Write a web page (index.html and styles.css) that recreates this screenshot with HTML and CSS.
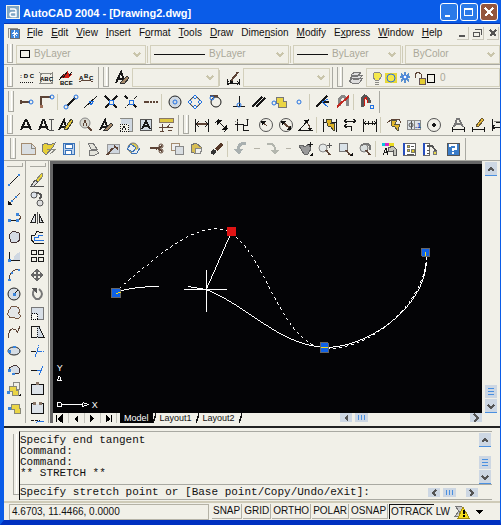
FILE: index.html
```html
<!DOCTYPE html>
<html lang="en">
<head>
<meta charset="utf-8">
<title>AutoCAD 2004 - [Drawing2.dwg]</title>
<link rel="stylesheet" href="styles.css">
</head>
<body>
<div class="window">
  <header class="title">
    <svg class="logo" viewBox="0 0 14 14"><rect x=".5" y=".5" width="13" height="13" fill="#7fa6c4" stroke="#f4f4ec"/><path d="M4 4h4q2 0 2 2v6M10 7.500H6q-2 0-2 2t2 2h4" fill="none" stroke="#fff" stroke-width="1.500" shape-rendering="auto"/></svg>
    <h1>AutoCAD 2004 - [Drawing2.dwg]</h1>
    <button class="cap" aria-label="Minimize"><svg viewBox="0 0 16 16"><path d="M4 12h5" stroke="#fff" stroke-width="2"/></svg></button>
    <button class="cap" aria-label="Maximize"><svg viewBox="0 0 16 16"><path d="M3 5h9" stroke="#fff" stroke-width="2"/><path d="M3.500 4v7.500h8V4" fill="none" stroke="#fff"/></svg></button>
    <button class="cap close" aria-label="Close"><svg viewBox="0 0 16 16"><path d="M4 4l8 8M12 4l-8 8" stroke="#fff" stroke-width="2"/></svg></button>
  </header>

  <nav class="menu">
    <svg class="doc" viewBox="0 0 14 13"><path d="M1 11V1h10" class="g"/><rect x="2.500" y="2.500" width="10" height="9" fill="#3c86dc" stroke="#666"/><path d="M7.500 3v8M4 7h7M5 4.500l5 5M10 4.500l-5 5" stroke="#fff"/></svg>
    <button><u>F</u>ile</button><button><u>E</u>dit</button><button><u>V</u>iew</button><button><u>I</u>nsert</button><button>F<u>o</u>rmat</button><button><u>T</u>ools</button><button><u>D</u>raw</button><button>Dime<u>n</u>sion</button><button><u>M</u>odify</button><button>E<u>x</u>press</button><button><u>W</u>indow</button><button><u>H</u>elp</button>
    <span class="mdi">
      <button aria-label="Minimize drawing"><svg viewBox="0 0 12 12"><path d="M2 9h6" class="d2"/></svg></button>
      <button aria-label="Restore drawing"><svg viewBox="0 0 12 12"><path d="M3 2.500h6.500v5M1.500 5.500h6v4h-6z" class="d"/><path d="M3 2h7" class="d"/></svg></button>
      <button aria-label="Close drawing"><svg viewBox="0 0 12 12"><path d="M3 3l6 6M9 3l-6 6" class="d2"/></svg></button>
    </span>
  </nav>

  <div class="bar props">
    <i class="grip"></i>
    <label class="combo c1"><svg class="sw" viewBox="0 0 10 8"><rect x=".5" y=".5" width="9" height="7" fill="none" stroke="#000"/></svg><select aria-label="Color"><option>ByLayer</option></select><svg class="chev" viewBox="0 0 8 5"><path d="M1 1l3 3 3-3"/></svg></label>
    <i class="sep"></i>
    <label class="combo c2"><i class="ln long"></i><select aria-label="Linetype"><option>ByLayer</option></select><svg class="chev" viewBox="0 0 8 5"><path d="M1 1l3 3 3-3"/></svg></label>
    <i class="sep"></i>
    <label class="combo c3"><i class="ln"></i><select aria-label="Lineweight"><option>ByLayer</option></select><svg class="chev" viewBox="0 0 8 5"><path d="M1 1l3 3 3-3"/></svg></label>
    <i class="sep"></i>
    <label class="combo c4"><select aria-label="Plot style"><option>ByColor</option></select><svg class="chev" viewBox="0 0 8 5"><path d="M1 1l3 3 3-3"/></svg></label>
  </div>

  <div class="bar layers">
    <i class="grip"></i>
    <button aria-label="Text fit"><svg viewBox="0 0 20 20"><text x="4" y="10" class="t6">: D C</text><path d="M4 14.500h13" class="k" stroke-dasharray="1 1"/></svg></button>
    <button aria-label="Text mask"><svg viewBox="0 0 20 20"><path d="M4 5h12v10H4zM3 4l3 3M17 4l-3 3M3 16l3-3M17 16l-3-3" class="g"/><text x="4" y="13" class="t6">ABC</text></svg></button>
    <button aria-label="Explode text"><svg viewBox="0 0 20 20"><path d="M5 10l4-5 3-2 1 3 3 0-3 4z" fill="#d02018"/><path d="M3 12l5-6M7 10l4-6M13 8l3-4" class="k"/><text x="4" y="17" class="t6">BCE</text></svg></button>
    <button aria-label="Arc text"><svg viewBox="0 0 20 20"><text x="3" y="12" class="t6">A</text><text x="8" y="10" class="t6">B</text><text x="13" y="12" class="t6">C</text><path d="M3 14q7-4 14 0" class="n"/></svg></button>
    <i class="edge"></i><i class="grip"></i>
    <button aria-label="Text style"><svg viewBox="0 0 20 20"><path d="M4 15L9 4l4 11M6 11h6" class="k2"/><path d="M8 15l7-7 2 2-5 6z" fill="#a58a6b" stroke="#333"/></svg></button>
    <label class="combo c5"><select aria-label="Text style name"></select><svg class="chev" viewBox="0 0 8 5"><path d="M1 1l3 3 3-3"/></svg></label>
    <i class="sep"></i>
    <button aria-label="Dimension style"><svg viewBox="0 0 20 20"><path d="M4 11v6M16 11v6M4 15h12M6 13l-2 2 2 2M14 13l2 2-2 2" class="k"/><path d="M8 13l7-9" class="n2"/><path d="M7 12l4 2-4 2z" fill="#111"/></svg></button>
    <label class="combo c5"><select aria-label="Dimension style name"></select><svg class="chev" viewBox="0 0 8 5"><path d="M1 1l3 3 3-3"/></svg></label>
    <i class="edge"></i><i class="grip"></i>
    <button aria-label="Layer manager"><svg viewBox="0 0 20 20"><path d="M3 13l5-3h9l-4 5H6zM4 10l5-3h8l-4 4H7zM5 7l4-3h6l-3 4H7z" fill="#ddd" stroke="#777"/></svg></button>
    <label class="combo c6">
      <svg class="state" viewBox="0 0 66 14"><path d="M5 1h4l2 2v3l-2 3H5L3 6V3z" fill="#f5e94c" stroke="#888"/><path d="M5 11h4M5 13h4" class="g"/><rect x="15" y="2" width="12" height="10" fill="#e8d838"/><circle cx="21" cy="7" r="4" fill="#f4e84a" stroke="#2a6fe0"/><path d="M35 1v11M30 6h10M31 3l8 7M39 3l-8 7" stroke="#5b91cf" stroke-width="2"/><circle cx="35" cy="6" r="2" fill="#fff" stroke="#2a6fe0"/><path d="M45 7V3l3-2 3 2v4" class="n"/><rect x="49" y="7" width="6" height="6" fill="#e3cc32" stroke="#655"/><rect x="57.500" y="3.500" width="7" height="8" fill="#f1f0e8" stroke="#000"/></svg>
      <select aria-label="Layer"><option>0</option></select></label>
  </div>

  <div class="bar snaps">
    <i class="grip"></i>
    <button aria-label="Tracking point"><svg viewBox="0 0 20 20"><path d="M3 10h10M4 8v4" class="n2"/><circle cx="14" cy="10" r="2" class="b"/></svg></button>
    <button aria-label="Snap from"><svg viewBox="0 0 20 20"><path d="M4 14V5h10" class="n2"/><circle cx="15" cy="5" r="2" class="b"/><rect x="3" y="13" width="3" height="3" fill="#a0715a"/></svg></button>
    <i class="sep"></i>
    <button aria-label="Endpoint"><svg viewBox="0 0 20 20"><path d="M6 14l8-8" class="k2"/><circle cx="15" cy="5" r="2" class="b"/><circle cx="5" cy="15" r="2" class="b"/></svg></button>
    <button aria-label="Midpoint"><svg viewBox="0 0 20 20"><path d="M3 16L16 4" class="k"/><path d="M8 9l2 4 3-4z" class="b"/></svg></button>
    <button aria-label="Intersection"><svg viewBox="0 0 20 20"><path d="M4 4l12 12M16 4L4 16" class="k2"/><path d="M8 8h4v4H8z" fill="#f1f0e8" stroke="#2272e2"/></svg></button>
    <button aria-label="Apparent intersection"><svg viewBox="0 0 20 20"><path d="M4 4l12 12" class="k2" stroke-dasharray="4 2"/><path d="M16 4L4 16" class="k" stroke-dasharray="4 1"/><path d="M8 8h4v4H8z" fill="#f1f0e8" stroke="#2272e2"/></svg></button>
    <button aria-label="Extension"><svg viewBox="0 0 20 20"><path d="M3 10h5" class="n2"/><path d="M9 10h9" class="n2" stroke-dasharray="2 1"/></svg></button>
    <i class="sep"></i>
    <button aria-label="Center"><svg viewBox="0 0 20 20"><circle cx="10" cy="10" r="6" fill="#cfd8e2" stroke="#222"/><circle cx="10" cy="10" r="2" class="b"/></svg></button>
    <button aria-label="Quadrant"><svg viewBox="0 0 20 20"><circle cx="10" cy="10" r="5" class="k"/><path d="M10 3l2 2-2 2-2-2zM10 13l2 2-2 2-2-2zM5 8l2 2-2 2-2-2zM15 8l2 2-2 2-2-2z" fill="#f1f0e8" stroke="#2272e2"/></svg></button>
    <button aria-label="Tangent"><svg viewBox="0 0 20 20"><circle cx="11" cy="10" r="5" class="k"/><path d="M5 4h8" class="n2"/><circle cx="7" cy="6" r="2" class="b"/></svg></button>
    <i class="sp"></i>
    <button aria-label="Perpendicular"><svg viewBox="0 0 20 20"><path d="M4 14.500h12M10 4v10" class="k"/><circle cx="10" cy="13" r="2" class="b"/></svg></button>
    <button aria-label="Parallel"><svg viewBox="0 0 20 20"><path d="M3 15L13 5M7 15L16 6" class="k2"/></svg></button>
    <button aria-label="Insertion"><svg viewBox="0 0 20 20"><path d="M7 5h7v4h3v6h-8v-4H7z" fill="#ead545" stroke="#777"/><circle cx="5" cy="11" r="2" class="b"/></svg></button>
    <button aria-label="Node"><svg viewBox="0 0 20 20"><circle cx="10" cy="10" r="2" class="b"/></svg></button>
    <i class="sep"></i>
    <button aria-label="Nearest"><svg viewBox="0 0 20 20"><path d="M3 15L14 4M7 10h9" class="k2"/><path d="M9 10l6-3M9 10l6 5" class="b"/></svg></button>
    <button aria-label="None"><svg viewBox="0 0 20 20"><path d="M6 14V7l4-3 4 3v7" stroke="#888" stroke-width="3" fill="none"/><path d="M4 15L16 4" class="r2"/></svg></button>
    <i class="sep"></i>
    <button aria-label="Snap settings"><svg viewBox="0 0 20 20"><path d="M5 15V7l3-3 3 2 2 5" stroke="#555" stroke-width="3" fill="none"/><path d="M7 14V8l2-3 2 6" class="r"/><path d="M13 13h3v3h-3z" class="b"/></svg></button>
    <i class="edge"></i>
  </div>

  <div class="bar text">
    <i class="grip"></i>
    <button aria-label="Multiline text"><svg viewBox="0 0 20 20"><path d="M5 15L9.500 5h1L15 15M7 12h6" class="k2"/></svg></button>
    <button aria-label="Single line text"><svg viewBox="0 0 20 20"><path d="M3 15L7 5h1l4 10M5 12h6" class="k2"/><path d="M13 4.500h5M15.500 4v12M13 15.500h5" class="d"/></svg></button>
    <button aria-label="Edit text"><svg viewBox="0 0 20 20"><path d="M3 15L8 5l3 10M5 12h6" class="k2"/><path d="M8 14l7-10 2 2-6 9z" fill="#e5c938" stroke="#443"/></svg></button>
    <button aria-label="Find and replace"><svg viewBox="0 0 20 20"><circle cx="9" cy="8" r="5" fill="#d8d8d0" stroke="#888"/><path d="M7 11l2-6 2 6" class="n"/><path d="M12 12l4 4" class="n2"/></svg></button>
    <button aria-label="Text style"><svg viewBox="0 0 20 20"><path d="M4 15L9 5l3 10M6 12h6" class="k2"/><path d="M8 15l7-7 2 2-5 5z" fill="#a58a6b" stroke="#333"/></svg></button>
    <button aria-label="Scale text"><svg viewBox="0 0 20 20"><path d="M5 4h12v12h-4V9H5z" class="w"/><path d="M4 3.500h12.500v13h-5" class="g"/><path d="M4 9.500h8v7H4z" class="k" stroke-dasharray="1 1"/><path d="M6 15l2-4 2 4" class="k"/></svg></button>
    <button aria-label="Justify text"><svg viewBox="0 0 20 20"><path d="M4.500 4.500h11v11h-11z" fill="#d2dae3" stroke="#555"/><path d="M6 14l4-8 4 8M8 11h4" class="k2"/></svg></button>
    <button aria-label="Convert distance"><svg viewBox="0 0 20 20"><path d="M3 3h14v4H3z" fill="#ddc640" stroke="#876"/><path d="M6 9v7M3 12h14M14 9l-3 4M12 15h4M4 16h4" class="n"/></svg></button>
    <i class="edge"></i><i class="grip"></i>
    <button aria-label="Linear dimension"><svg viewBox="0 0 20 20"><path d="M3.500 4v13M16.500 4v13" class="k"/><path d="M4 9h12" class="n2"/><path d="M7 6L4 9l3 3M13 6l3 3-3 3" class="k"/></svg></button>
    <button aria-label="Aligned dimension"><svg viewBox="0 0 20 20"><path d="M3 8l4-4M12 17l4-4M6 6l8 8" class="k"/><path d="M5 5h5l-5 5zM15 9v6H9z" fill="#111"/></svg></button>
    <button aria-label="Ordinate dimension"><svg viewBox="0 0 20 20"><path d="M5 4v12M3 9h8v6h6M11 15v-5h4V4" class="k"/><path d="M3 6h4M14 4h4" class="g" stroke-dasharray="1 1"/></svg></button>
    <i class="sp"></i>
    <button aria-label="Radius dimension"><svg viewBox="0 0 20 20"><circle cx="10" cy="10" r="6.500" class="d"/><path d="M6 7l5 4" class="n"/><path d="M5 6h5l-4 4z" fill="#111"/></svg></button>
    <button aria-label="Diameter dimension"><svg viewBox="0 0 20 20"><circle cx="10" cy="10" r="6.500" class="d"/><path d="M6 7l8 6" class="n2"/><path d="M5 6h5l-4 4zM15 10v5h-5z" fill="#111"/></svg></button>
    <button aria-label="Angular dimension"><svg viewBox="0 0 20 20"><path d="M13 4L3 15.500h14" class="k"/><path d="M9 6q5 3 5 9" class="n"/><path d="M8 5h5l-2 4zM11 13h5l-2 3z" fill="#111"/></svg></button>
    <i class="sep"></i>
    <button aria-label="Quick dimension"><svg viewBox="0 0 20 20"><path d="M3.500 4v13M16.500 4v13M4 7h12" class="k"/><path d="M6 4h6l-1 4h4l-1 8-4-5H8z" fill="#dfb323" stroke="#443"/></svg></button>
    <button aria-label="Baseline dimension"><svg viewBox="0 0 20 20"><path d="M4 6h12M4 11h7M11 11v5M7 4L4 6l3 2M13 4l3 2-3 2M7 9l-3 2 3 2" class="k"/></svg></button>
    <button aria-label="Continue dimension"><svg viewBox="0 0 20 20"><path d="M3.500 4v13M16.500 4v13M4 8h12M6 6L4 8l2 2M14 6l2 2-2 2M8 6v4M12 6v4" class="k"/></svg></button>
    <i class="sep"></i>
    <button aria-label="Quick leader"><svg viewBox="0 0 20 20"><path d="M7 5h6l-2 4h5l-2 7-4-5H8z" fill="#e1b82b" stroke="#554"/><path d="M3 8l5-4h7l2 4" class="n"/></svg></button>
    <button aria-label="Tolerance"><svg viewBox="0 0 20 20"><path d="M3.500 5.500h13v9h-13z" fill="#dde3e8" stroke="#888"/><path d="M10.500 5v9" class="g"/><circle cx="7" cy="10" r="2" class="d"/><path d="M7 6v8" class="d"/><text x="11" y="13" class="t7 tb">.1</text></svg></button>
    <button aria-label="Center mark"><svg viewBox="0 0 20 20"><circle cx="10" cy="10" r="6.500" class="d"/><path d="M8 10h4M10 8v4" class="k2"/></svg></button>
    <i class="sp"></i>
    <button aria-label="Edit dimension"><svg viewBox="0 0 20 20"><path d="M6 12l3-8h2l4 8M7 9h6" stroke="#777" stroke-width="2" fill="none"/><path d="M4 14.500h13M4 12v5M16 12v5" class="k"/></svg></button>
    <button aria-label="Edit dimension text"><svg viewBox="0 0 20 20"><path d="M8 11l6-8 2 2-6 7z" fill="#e5b938" stroke="#653"/><path d="M4 14.500h13M4 12v5M16 12v5" class="k"/></svg></button>
    <button aria-label="Update dimension"><svg viewBox="0 0 20 20"><path d="M4 4v12M4 12h14M7 10l-3 2 3 2M8 7h9" class="k"/><path d="M6 6h12" class="g"/></svg></button>
  </div>

  <div class="bar std">
    <i class="grip"></i>
    <button aria-label="New"><svg viewBox="0 0 20 20"><path d="M2.500 4.500h10l4 4v7h-14z" fill="#d9dee2" stroke="#a38b70"/><path d="M12 5v4h4" class="g"/></svg></button>
    <button aria-label="Open"><svg viewBox="0 0 20 20"><path d="M3 6l4-2 3 2 6-2-2 4-7 8-3-3z" fill="#e6cf3a" stroke="#777"/><path d="M8 10h9l-6 5" class="g"/></svg></button>
    <button aria-label="Save"><svg viewBox="0 0 20 20"><path d="M4.500 4.500h11v11h-11z" fill="#bdd3ee" stroke="#3972b8"/><path d="M6.500 5.500h7v4h-7zM6.500 11.500h6v4h-6z" fill="#fff" stroke="#3972b8"/></svg></button>
    <i class="sep"></i>
    <button aria-label="Plot"><svg viewBox="0 0 20 20"><path d="M5 4h5l4 6H8zM6 11h7l3 3-4 2H6z" fill="#e4e4dc" stroke="#777"/></svg></button>
    <button aria-label="Plot preview"><svg viewBox="0 0 20 20"><path d="M4 5h12v9H4z" fill="#cfd6df" stroke="#999"/><path d="M4 16l6-7M11 7l4 3" class="n2"/></svg></button>
    <button aria-label="Publish"><svg viewBox="0 0 20 20"><circle cx="10" cy="9" r="5" fill="#dccb56" stroke="#777"/><path d="M4 10l4-5 5 4-3 4zM8 14h6l3-5" fill="#e8ecf0" stroke="#3972b8"/></svg></button>
    <i class="sp"></i>
    <button aria-label="Cut"><svg viewBox="0 0 20 20"><path d="M3 9h7l5 3M9 10l6-3" class="n2"/><circle cx="14" cy="7" r="2" class="n"/><circle cx="14" cy="12" r="2" class="n"/></svg></button>
    <button aria-label="Copy"><svg viewBox="0 0 20 20"><path d="M4.500 4.500h8v7h-8z" fill="#eee" stroke="#a38b70"/><path d="M8.500 7.500h8v8h-8z" fill="#d9dee2" stroke="#888"/></svg></button>
    <button aria-label="Paste"><svg viewBox="0 0 20 20"><path d="M4 6l5-2 6 5-5 6-6-2z" fill="#d8be55" stroke="#777"/><path d="M9 9l6 1-2 5-5-1z" fill="#f0f0ec" stroke="#888"/></svg></button>
    <button aria-label="Match properties"><svg viewBox="0 0 20 20"><path d="M5 15l3-4" stroke="#333" stroke-width="4"/><path d="M9 11l6-6" stroke="#553828" stroke-width="3"/></svg></button>
    <i class="sep"></i>
    <button aria-label="Undo"><svg viewBox="0 0 20 20"><path d="M15 4q-8 0-8 7v2" stroke="#a9b0b0" stroke-width="3" fill="none"/><path d="M3 10h9l-4 6z" fill="#a9b0b0"/></svg></button>
    <button class="mini" aria-label="Undo list"><svg viewBox="0 0 12 20"><path d="M3 9.500h6" stroke="#b5b3a8"/></svg></button>
    <button aria-label="Redo"><svg viewBox="0 0 20 20"><path d="M4 5q8-1 8 5v2" stroke="#b3b6ae" stroke-width="2" fill="none"/><path d="M7 11h9l-4 5z" fill="#b3b6ae"/></svg></button>
    <button class="mini" aria-label="Redo list"><svg viewBox="0 0 12 20"><path d="M3 9.500h5" stroke="#b5b3a8"/></svg></button>
    <button aria-label="Pan"><svg viewBox="0 0 20 20"><path d="M4 7l3-1 3 2 4-3 2 5-3 5H9z" fill="#999" stroke="#666"/><path d="M13 5h5M15.500 3v5" class="k"/><path d="M14 17h4v-4z" fill="#111"/></svg></button>
    <button aria-label="Zoom realtime"><svg viewBox="0 0 20 20"><circle cx="8" cy="9" r="4" fill="#e4e8e8" stroke="#888"/><path d="M11 11l4 5" class="n2"/><path d="M12 6h5M14.500 4v5" class="d"/></svg></button>
    <button aria-label="Zoom window"><svg viewBox="0 0 20 20"><path d="M4.500 4.500h8v8h-8z" fill="#d9e2e8" stroke="#777"/><path d="M11 11l4 5" class="n2"/><path d="M14 17h4v-4z" fill="#111"/></svg></button>
    <button aria-label="Zoom previous"><svg viewBox="0 0 20 20"><circle cx="9" cy="9" r="4" fill="#d9dede" stroke="#777"/><path d="M6 7q5-5 9 0v4" stroke="#777" stroke-width="2" fill="none"/><path d="M11 11l4 5" class="n2"/></svg></button>
    <i class="sep"></i>
    <button aria-label="Properties"><svg viewBox="0 0 20 20"><path d="M3 4h4v3H3z" fill="#0ac8e0"/><path d="M6 4h4v3H6z" fill="#d428c8"/><path d="M10 4h5v3h-5z" fill="#eadb20"/><path d="M4 16l3-7 2 7M5 13h4" class="k"/><path d="M9 9l5-2 3 3v6h-3v-4l-4 1z" fill="#c4c4bc" stroke="#555"/></svg></button>
    <button aria-label="DesignCenter"><svg viewBox="0 0 20 20"><path d="M4.500 4.500h12v12h-12z" fill="#fff" stroke="#666"/><path d="M5 4v12" stroke="#274fc0" stroke-width="2"/><path d="M8 6h2v2H8zM8 10h2v2H8zM12 10h3v3h-3z" fill="#e0c82c" stroke="#776"/><path d="M12 7h3M8 15h7" class="d"/></svg></button>
    <button aria-label="Tool palettes"><svg viewBox="0 0 20 20"><path d="M4.500 4.500h6v12h-6z" fill="#fff" stroke="#666"/><path d="M5 4v12" stroke="#274fc0" stroke-width="2"/><path d="M8 7h5l4 5" class="d2"/><path d="M8 11h3M8 14h3" class="d"/><path d="M14.500 12.500h3v3h-3z" fill="#ead948" stroke="#777"/></svg></button>
    <i class="sp"></i>
    <button aria-label="Help"><svg viewBox="0 0 20 20"><path d="M4 4h12v12H4z" fill="#3a7cc8" stroke="#555"/><path d="M7 8V6h6v4h-3v2M10 13v2" stroke="#fff" stroke-width="2" fill="none"/></svg></button>
    <i class="edge"></i>
  </div>

  <main class="work">
    <div class="side">
      <i class="hgrip"></i>
      <button aria-label="Line"><svg viewBox="0 0 20 20"><path d="M5 15L15 5" class="k"/><path d="M4 14h2v2H4zM14 4h2v2h-2z" class="bf"/></svg></button>
      <button aria-label="Construction line"><svg viewBox="0 0 20 20"><path d="M4 16L16 4" class="n"/><path d="M4 12v4h4z" fill="#111"/><path d="M7 11h2v2H7zM11 7h2v2h-2z" class="bf"/></svg></button>
      <button aria-label="Polyline"><svg viewBox="0 0 20 20"><path d="M5 12.500h9" class="k"/><path d="M14 12q3-1 2-4l-3-2" class="n"/><path d="M4 11h3v3H4zM12 11h3v3h-3zM12 5h3v3h-3z" class="bf"/></svg></button>
      <button aria-label="Polygon"><svg viewBox="0 0 20 20"><path d="M5 8l4-4 6 2 1 7-3 2H7z" fill="#d5dce4" stroke="#433"/></svg></button>
      <button aria-label="Rectangle"><svg viewBox="0 0 20 20"><path d="M9 14l2-5 5-3v8z" class="w"/><path d="M5 6v8.500h11" class="k"/><path d="M4 13h3v3H4z" class="bf"/></svg></button>
      <button aria-label="Arc"><svg viewBox="0 0 20 20"><path d="M5 15q0-10 10-11" class="n"/><path d="M4 14h3v2H4zM7 7h2v2H7zM14 4h2v2h-2z" class="bf"/></svg></button>
      <button aria-label="Circle"><svg viewBox="0 0 20 20"><circle cx="10" cy="10" r="6" fill="#d5dce4" stroke="#222"/><path d="M10 10l4-4" class="k"/><path d="M9 9h3v3H9z" class="bf"/></svg></button>
      <button aria-label="Revision cloud"><svg viewBox="0 0 20 20"><path d="M6 6q0-3 4-2 4-1 5 2 2 3-1 4 4 3 1 5-3 2-5-1-4 2-5-1-3-2 0-4-1-2 1-3z" fill="#e3e6e8" stroke="#755743"/></svg></button>
      <button aria-label="Spline"><svg viewBox="0 0 20 20"><path d="M4 16q1-10 5-9t4 3 3-6" class="n"/></svg></button>
      <button aria-label="Ellipse"><svg viewBox="0 0 20 20"><ellipse cx="10" cy="10" rx="6" ry="4" fill="#d5dce4" stroke="#222"/><path d="M4 9h3v3H4zM9 5h3v2H9z" class="bf"/></svg></button>
      <button aria-label="Ellipse arc"><svg viewBox="0 0 20 20"><path d="M5 9q2-4 8-3 4 3 2 7l-5 1" fill="#d5dce4" stroke="#433"/><path d="M4 9h3v3H4zM8 13h3v2H8z" class="bf"/></svg></button>
      <button aria-label="Insert block"><svg viewBox="0 0 20 20"><path d="M9.500 3.500h6v7h-6z" class="g"/><path d="M5 7h7v4h2v5H8v-4H5z" fill="#ead545" stroke="#887"/><path d="M3 12h3v3H3z" class="bf"/><path d="M14 17h3v-3z" fill="#111"/></svg></button>
      <button aria-label="Make block"><svg viewBox="0 0 20 20"><path d="M7 6h8v4h1v5h-6v-4H7z" fill="#ead545" stroke="#887"/><path d="M4 9h3v3H4z" class="bf"/></svg></button>
    </div>
    <div class="side">
      <i class="hgrip"></i>
      <button aria-label="Erase"><svg viewBox="0 0 20 20"><path d="M9 10l6-7 1 3-5 6z" fill="#edd631" stroke="#887"/><path d="M4 16l4-6 3 2-4 4zM4 16.500h13" fill="#ddd" stroke="#555"/></svg></button>
      <button aria-label="Copy object"><svg viewBox="0 0 20 20"><circle cx="7" cy="6" r="3" fill="#dde3ea" stroke="#555"/><circle cx="13" cy="14" r="3" fill="#ddd" stroke="#555"/><path d="M9 4q7 0 4 6" class="d2"/></svg></button>
      <button aria-label="Mirror"><svg viewBox="0 0 20 20"><path d="M4 14.500h4V6zM16 14.500h-4V6z" fill="#dfe3e7" stroke="#222"/><path d="M10.500 4v12" class="d"/></svg></button>
      <button aria-label="Offset"><svg viewBox="0 0 20 20"><path d="M16 5h-4l-2-1-2 4H5l-1 4 3 4h10" class="k"/><path d="M16 8h-5v2H7v3h10" class="b"/></svg></button>
      <button aria-label="Array"><svg viewBox="0 0 20 20"><path d="M4.500 4.500h5v4h-5zM11.500 4.500h5v4h-5zM4.500 11.500h5v4h-5zM11.500 11.500h5v4h-5z" class="k"/></svg></button>
      <button aria-label="Move"><svg viewBox="0 0 20 20"><path d="M10 5v10M5 10h10" stroke="#666" stroke-width="2"/><path d="M10 3l3 4H7zM10 17l-3-4h6zM3 10l4-3v6zM17 10l-4-3v6z" fill="#666"/></svg></button>
      <button aria-label="Rotate"><svg viewBox="0 0 20 20"><path d="M12 5q6 5 0 10H9q-5-4-2-9" stroke="#777" stroke-width="2" fill="none" shape-rendering="auto"/><path d="M4 4h6v5z" fill="#555"/></svg></button>
      <button aria-label="Scale"><svg viewBox="0 0 20 20"><path d="M4.500 4.500h12v12h-12z" fill="#d7dee6" stroke="#777"/><path d="M4.500 10.500h6v6h-6z" fill="#f6f6f0" stroke="#000" stroke-dasharray="1 1"/></svg></button>
      <button aria-label="Stretch"><svg viewBox="0 0 20 20"><path d="M10 4h3l4 12h-7z" class="w"/><path d="M10 15.500H4.500V4.500H12l5 11h-6" class="k"/><path d="M10.500 4v12" class="k" stroke-dasharray="1 1"/></svg></button>
      <button aria-label="Trim"><svg viewBox="0 0 20 20"><path d="M4 10.500h5" class="k"/><path d="M10 10.500h7M8 16l4-12" class="b" stroke-dasharray="5 1"/></svg></button>
      <button aria-label="Extend"><svg viewBox="0 0 20 20"><path d="M4 10.500h6" class="k"/><path d="M10 10.500h3M12 15l4-9" class="b"/></svg></button>
      <button aria-label="Break at point"><svg viewBox="0 0 20 20"><path d="M4.500 5.500h12v10h-12z" fill="#dce2e8" stroke="#111"/><path d="M9 3h3v3H9z" fill="#877567"/></svg></button>
      <button aria-label="Break"><svg viewBox="0 0 20 20"><path d="M7 5.500H4.500v10h12v-10H14" fill="#dce2e8" stroke="#111"/><path d="M6 4h3v3H6zM12 4h3v3h-3z" fill="#877567"/></svg></button>
      <button aria-label="Chamfer"><svg viewBox="0 0 20 20"><path d="M4 3.500h9" class="k" stroke-dasharray="3 1"/><path d="M8 7l3-3h6" class="b"/></svg></button>
    </div>
    <section class="view">
      <svg class="canvas" viewBox="53 164 429 250" preserveAspectRatio="xMidYMin meet" role="img" aria-label="Spline being stretched">
        <g fill="none" stroke="#fff">
          <path stroke-dasharray="3 3" d="M114 293C150 262 185 230 215 229C262 228 275 346 326 349C372 352 430 300 427 252"/>
          <path d="M114 293C130 288 145 287 159 287M188 287L206 290C245 305 280 346 324 348C365 350 425 310 427 262M206 290L231 233"/>
          <path d="M206.500 270v43M184 290.500h43"/>
          <path d="M56.500 403.500h4v4h-4zM61 405.500h21M82 403.500l6 2-6 2zM58.500 376.500l2 5h-4z"/>
        </g>
        <text x="56" y="372" class="ucs">Y</text><text x="91" y="409" class="ucs">X</text>
        <g fill="#1062e6" stroke="#666"><path d="M110.500 289.500h9v9h-9zM320.500 343.500h8v10h-8zM422.500 248.500h8v8h-8z"/></g>
        <path d="M227 227h9v9h-9z" fill="#e01414"/>
        <path d="M115 294l5-1M321 348.500h7M426.500 252v4" stroke="#f0dc20" fill="none"/>
      </svg>
      <div class="tabs">
        <button class="nav" aria-label="First"><svg viewBox="0 0 15 9"><path d="M3.500 1v7M9 1v7L5 5z" stroke="#000"/></svg></button><button class="nav" aria-label="Previous"><svg viewBox="0 0 15 9"><path d="M9 1v7L5 5z"/></svg></button><button class="nav" aria-label="Next"><svg viewBox="0 0 15 9"><path d="M5 1v7l4-3z"/></svg></button><button class="nav" aria-label="Last"><svg viewBox="0 0 15 9"><path d="M5 1v7l4-3zM10.500 1v7" stroke="#000"/></svg></button>
        <button class="tab on">Model</button><i class="slash"></i><button class="tab">Layout1</button><i class="slash"></i><button class="tab">Layout2</button><i class="slash"></i>
        <div class="hs"><button class="sb first" aria-label="Scroll left"><svg viewBox="0 0 12 9"><path d="M8 1L4 5l4 4z" fill="#555"/></svg></button><i class="thumb h"></i><i class="fill"></i><button class="sb" aria-label="Scroll right"><svg viewBox="0 0 12 9"><path d="M4 1l4 4-4 4" class="d2"/></svg></button></div>
      </div>
    </section>
    <div class="vs"><button class="sb v" aria-label="Scroll up"><svg viewBox="0 0 12 12"><path d="M3 8l3-3 3 3" class="d2"/></svg></button><i class="fill"></i><i class="thumb v"></i><button class="sb v" aria-label="Scroll down"><svg viewBox="0 0 12 12"><path d="M3 5l3 3 3-3" class="d2"/></svg></button></div>
  </main>

  <section class="command">
    <i class="grip tall"></i>
    <div class="console">
      <div class="log"><pre>Specify end tangent
Command:
Command:
** STRETCH **</pre>
        <div class="vs cv"><button class="sb v" aria-label="Scroll log up"><svg viewBox="0 0 12 12"><path d="M3 8l3-3 3 3" class="d2"/></svg></button><i class="fill"></i><i class="thumb v"></i><button class="sb v" aria-label="Scroll log down"><svg viewBox="0 0 12 12"><path d="M3 5l3 3 3-3" class="d2"/></svg></button></div>
      </div>
      <div class="prompt"><label for="cmd">Specify stretch point or [Base point/Copy/Undo/eXit]:</label><input id="cmd" type="text">
        <button class="sb" aria-label="Scroll command left"><svg viewBox="0 0 12 9"><path d="M8 2L5 5l3 3" class="d2"/></svg></button><i class="thumb h"></i><button class="sb last" aria-label="Scroll command right"><svg viewBox="0 0 12 9"><path d="M4 2l3 3-3 3" class="d2"/></svg></button></div>
    </div>
  </section>

  <footer class="status">
    <output>4.6703, 11.4466, 0.0000</output>
    <button>SNAP</button><button>GRID</button><button>ORTHO</button><button>POLAR</button><button>OSNAP</button><button class="on" aria-pressed="true">OTRACK</button><button class="last-mode">LW</button>
    <svg class="warn" viewBox="0 0 18 14"><path d="M3 1h6l3 3-5 3 3 4H3l4-5z" fill="#ccc" stroke="#777"/><path d="M11 2l6 11H6z" fill="#f3dc1c" stroke="#a08a10"/><path d="M11.500 5v4M11.500 10v2" stroke="#000" stroke-width="2"/></svg>
    <svg class="more" viewBox="0 0 8 4"><path d="M0 0h8L4 4z"/></svg>
  </footer>
</div>
</body>
</html>
```
FILE: styles.css
```css
* { box-sizing: border-box; }

body {
  margin: 0;
  font: 10px/14px "Liberation Sans", Arial, sans-serif;
  color: #111;
}

button {
  flex: none;
  margin: 0;
  padding: 0;
  border: 0;
  background: none;
  font: inherit;
  color: inherit;
}

svg { display: block; flex: none; shape-rendering: crispEdges; }
circle, ellipse { shape-rendering: auto; }

.window {
  display: flex;
  flex-direction: column;
  height: 100vh;
  min-height: 420px;
  overflow: hidden;
  background: #f1f0e8;
  border: solid #0a5ce8;
  border-width: 0 1px 5px 4px;
  border-bottom-color: #0030c0;
  position: relative;
}
.window::before {
  content: "";
  position: absolute;
  left: -4px;
  top: 0;
  bottom: -5px;
  width: 2px;
  background: #0022b4;
}

/* Stroke and fill palette shared by the icons */
.k, .k2, .b, .n, .n2, .g, .d, .d2, .r, .r2 { fill: none; }
.k { stroke: #181818; }
.k2 { stroke: #181818; stroke-width: 2; }
.b { stroke: #2272e2; }
.bf { fill: #3b86dc; }
.n { stroke: #5d4436; }
.n2 { stroke: #5d4436; stroke-width: 2; }
.g { stroke: #8a8a84; }
.d { stroke: #555; }
.d2 { stroke: #555; stroke-width: 2; }
.r { stroke: #d01c14; }
.r2 { stroke: #c02820; stroke-width: 2; }
.w { fill: #cfd8e2; }
.t6 { font-size: 6px; font-weight: bold; }
.t7 { font-size: 7px; font-weight: bold; }
.tb { fill: #1c48b0; }

/* Title bar */
.title {
  flex: none;
  display: flex;
  align-items: center;
  gap: 2px;
  height: 24px;
  padding: 0 2px;
  background: #0a5ce8;
  border-bottom: 1px solid #0534b0;
}
.logo { width: 14px; height: 14px; }
.title h1 {
  flex: 1;
  margin: 2px 0 0 1px;
  font: bold 11px/16px "Liberation Sans", Arial, sans-serif;
  color: #fff;
  white-space: nowrap;
}
.cap {
  width: 18px;
  height: 18px;
  border: 1px solid #fff;
  border-radius: 3px;
  background: #2b7ae8;
}
.cap svg { width: 16px; height: 16px; }
.close { background: #94563e; }

/* Menu bar */
.menu {
  flex: none;
  display: flex;
  align-items: center;
  gap: 8px;
  height: 18px;
  padding-left: 4px;
}
.doc { width: 13px; height: 13px; margin-right: -2px; }
.mdi { display: flex; gap: 3px; margin-left: auto; padding-right: 1px; }
.mdi button { width: 12px; height: 13px; border: solid #c9c7bb; border-width: 0 1px 1px 0; }
.mdi svg { width: 12px; height: 12px; }

/* Toolbars */
.bar {
  flex: none;
  display: flex;
  align-items: center;
  height: 24px;
  padding: 2px 0 0 3px;
  overflow: hidden;
  border-bottom: 1px solid #a9a9a2;
}
.bar button { width: 20px; height: 20px; }
.bar button svg { width: 20px; height: 20px; }
.bar .mini { width: 12px; }
.bar .mini svg { width: 12px; }
.grip {
  flex: none;
  align-self: stretch;
  width: 6px;
  margin: 0 3px 1px 0;
  border: solid #a9a9a2;
  border-width: 0 1px 1px 1px;
  background: linear-gradient(90deg, transparent 2px, #fff 2px, #fff 3px, transparent 3px);
}
.sep { flex: none; width: 4px; height: 16px; border-left: 1px solid #cfccb8; }
.sp { flex: none; width: 4px; }
.edge { flex: none; align-self: stretch; width: 5px; margin-left: 2px; border-left: 1px solid #a9a9a2; }
.props { height: 23px; }
.props .sep { margin: 0 1px; height: 17px; width: 2px; }
.snaps { border-bottom: 0; padding-left: 4px; }
.text { height: 23px; }
.std { padding-left: 6px; height: 25px; }

.combo {
  flex: none;
  display: flex;
  align-items: center;
  gap: 4px;
  height: 19px;
  padding: 0 4px 0 3px;
  border: 1px solid #d3d0bc;
}
.combo select {
  flex: 1;
  min-width: 0;
  padding: 0;
  border: 0;
  appearance: none;
  background: none;
  font: inherit;
  color: #aaa899;
}
.sw { width: 10px; height: 8px; }
.chev { width: 8px; height: 5px; fill: none; stroke: #c9c5ab; stroke-width: 2; }
.ln { flex: none; width: 31px; height: 1px; background: #111; }
.long { width: 51px; }
.c1 { width: 130px; }
.c2 { width: 139px; }
.c3 { width: 108px; }
.c4 { flex: 1 0 92px; padding-left: 7px; }
.c5 { width: 87px; }
.c6 { flex: 1 0 130px; }
.state { width: 66px; height: 14px; }

/* Work area */
.work { flex: 1; display: flex; min-height: 0; overflow: hidden; border-bottom: 3px solid #f1f0e8; }
.side {
  flex: none;
  width: 23px;
  padding: 2px 0 0 1px;
  overflow: hidden;
  border-right: 1px solid #a9a9a2;
}
.side:first-child { width: 22px; padding-left: 0; }
.side button { display: block; width: 20px; height: 19px; }
.side svg { width: 20px; height: 20px; }
.hgrip { display: block; height: 4px; margin: 0 2px 3px 3px; border: solid #a9a9a2; border-width: 0 1px 1px 0; }
.view {
  flex: 1;
  min-width: 0;
  display: flex;
  flex-direction: column;
  margin-left: 1px;
  border: solid #666;
  border-width: 3px 0 0 3px;
  background: #040406;
}
.canvas { flex: 1; width: 100%; min-height: 0; }
.ucs { fill: #fff; font-size: 9px; }
.tabs {
  flex: none;
  display: flex;
  height: 10px;
  background: #f1f0e8;
  font-size: 9px;
  line-height: 10px;
}
.nav { width: 16px; border-right: 1px solid #c4c4bc; }
.nav svg { width: 15px; height: 9px; }
.tab { height: 10px; padding: 0 4px; }
.on.tab { margin-left: 3px; background: #040406; color: #fff; }
.slash { flex: none; width: 3px; background: linear-gradient(110deg, transparent 40%, #111 40%, #111 65%, transparent 65%); }
.hs { flex: none; display: flex; width: 148px; margin-left: auto; }
.fill { flex: 1; }

.sb { width: 12px; height: 9px; background: #cdd7e3; }
.sb svg { width: 12px; height: 9px; }
.sb.v { width: 12px; height: 14px; border-bottom: 1px solid #4a90e0; }
.sb.v svg { height: 12px; }
.first { margin-left: 6px; }
.last { margin: 0 14px 0 10px; }
.thumb { flex: none; background: #cdd7e3; }
.thumb.h {
  width: 13px;
  height: 9px;
  margin-left: 3px;
  border: solid #cdd7e3;
  border-width: 2px 3px;
  background: repeating-linear-gradient(90deg, #4a90e0 0 1px, #cdd7e3 1px 3px);
}
.thumb.v {
  width: 12px;
  height: 13px;
  margin-bottom: 1px;
  border: solid #cdd7e3;
  border-width: 3px;
  background: repeating-linear-gradient(#4a90e0 0 1px, #cdd7e3 1px 3px);
}
.vs { flex: none; display: flex; flex-direction: column; width: 18px; padding: 1px 0 10px 3px; }

/* Command window */
.command {
  flex: none;
  display: flex;
  padding: 3px 8px 1px 9px;
  border-top: 2px solid #222;
}
.grip.tall { margin: 3px 0 5px; width: 6px; border-right: 0; }
.console {
  flex: 1;
  min-width: 0;
  border-top: 1px solid #a9a9a2;
  border-left: 1px solid #111;
  font: 11px/11px "Liberation Mono", monospace;
}
.log { display: flex; height: 53px; border-bottom: 1px solid #a9a9a2; }
.log pre { flex: 1; margin: 3px 0; font: inherit; }
.cv { width: 14px; padding: 1px 0 0 1px; }
.prompt { display: flex; align-items: center; height: 15px; border-bottom: 1px solid #a9a9a2; }
.prompt label { white-space: nowrap; }
.prompt input { flex: 1; min-width: 0; padding: 0; border: 0; background: none; font: inherit; outline: 0; }

/* Status bar */
.status {
  flex: none;
  display: flex;
  align-items: center;
  gap: 1px;
  height: 19px;
  padding: 0 17px 0 5px;
  border-top: 2px solid #cfcbb8;
  white-space: nowrap;
}
.status output { flex: 1; margin-right: 2px; padding: 0 2px; line-height: 14px; border: 1px solid #b4b2a6; }
.status button { padding: 0 1px; line-height: 14px; border: solid #b4b2a6; border-width: 0 1px 1px 0; }
.status .on { border: 1px solid #111; border-width: 1px 0 0 1px; }
.status .last-mode { border: 0; }
.warn { width: 18px; height: 14px; }
.more { width: 8px; height: 4px; margin-left: 4px; }
```
